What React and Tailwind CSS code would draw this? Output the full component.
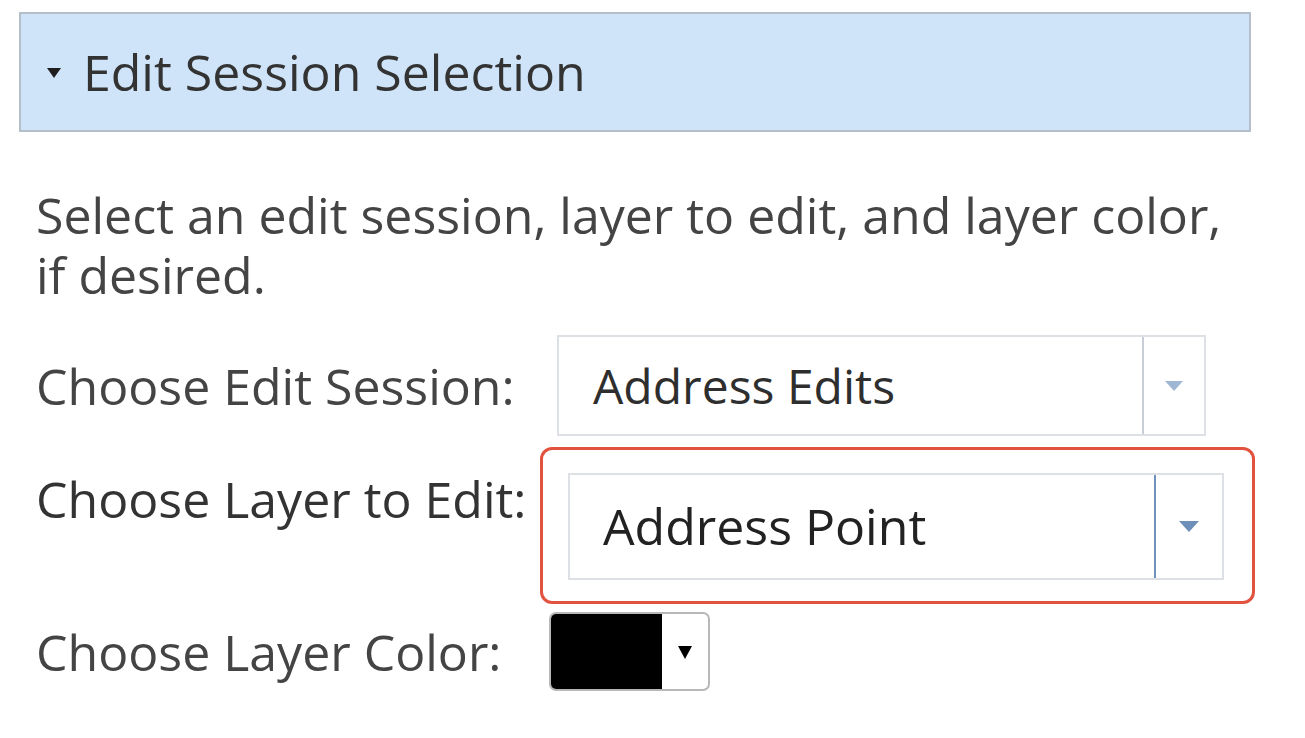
export default function App() {
  const font = { fontFamily: '"Open Sans", Lato, sans-serif' };
  return (
    <div className="w-[1305px] h-[738px] bg-white text-[#3a3a3a] overflow-hidden" style={font}>
      <div className="pt-[12px] pl-[19px]">
        <div className="w-[1232px] h-[120px] bg-[#cfe4f8] border-2 border-[#b5bfca] flex items-center pl-[26px]">
          <svg width="14" height="10" viewBox="0 0 14 10" className="mr-[22px] mt-[2px]">
            <polygon points="0,0 14,0 7,10" fill="#1e1e1e" />
          </svg>
          <span className="text-[50px] text-[#333] leading-none">Edit Session Selection</span>
        </div>
      </div>
      <div className="pl-[36px] pt-[53px]">
        <p className="text-[50px] leading-[60px] w-[1210px] text-[#444]">
          Select an edit session, layer to edit, and layer color, if desired.
        </p>
        <div className="flex items-center mt-[30px]">
          <span className="text-[50px] leading-[60px] w-[521px] text-[#444]">Choose Edit Session:</span>
          <div className="w-[649px] h-[101px] border-2 border-[#dde1e5] flex">
            <div className="flex-1 flex items-center pl-[34px] text-[48px] text-[#2e2e2e]">Address Edits</div>
            <div className="w-[62px] border-l-2 border-[#c9ced6] flex items-center justify-center">
              <svg width="18" height="10" viewBox="0 0 18 10"><polygon points="0,0 18,0 9,10" fill="#9fb6d4" /></svg>
            </div>
          </div>
        </div>
        <div className="flex items-start mt-[11px]">
          <span className="text-[50px] leading-[60px] w-[504px] text-[#333] mt-[22px]">Choose Layer to Edit:</span>
          <div className="w-[715px] h-[157px] border-[3px] border-[#e2533f] rounded-[12px] pl-[25px] pt-[23px]">
            <div className="w-[656px] h-[107px] border-2 border-[#dde1e5] flex">
              <div className="flex-1 flex items-center pl-[33px] text-[50px] text-[#222]">Address Point</div>
              <div className="w-[68px] border-l-2 border-[#6e92bd] flex items-center justify-center">
                <svg width="20" height="11" viewBox="0 0 20 11"><polygon points="0,0 20,0 10,11" fill="#6e8fb8" /></svg>
              </div>
            </div>
          </div>
        </div>
        <div className="flex items-center mt-[8px]">
          <span className="text-[50px] leading-[60px] w-[513px] text-[#444]">Choose Layer Color:</span>
          <div className="w-[161px] h-[79px] border-2 border-[#b8b8b8] rounded-[7px] flex overflow-hidden">
            <div className="w-[111px] bg-black"></div>
            <div className="flex-1 flex items-center justify-center">
              <svg width="16" height="16" viewBox="0 0 16 16"><polygon points="1,2 15,2 8,15" fill="#000" /></svg>
            </div>
          </div>
        </div>
      </div>
    </div>
  );
}
